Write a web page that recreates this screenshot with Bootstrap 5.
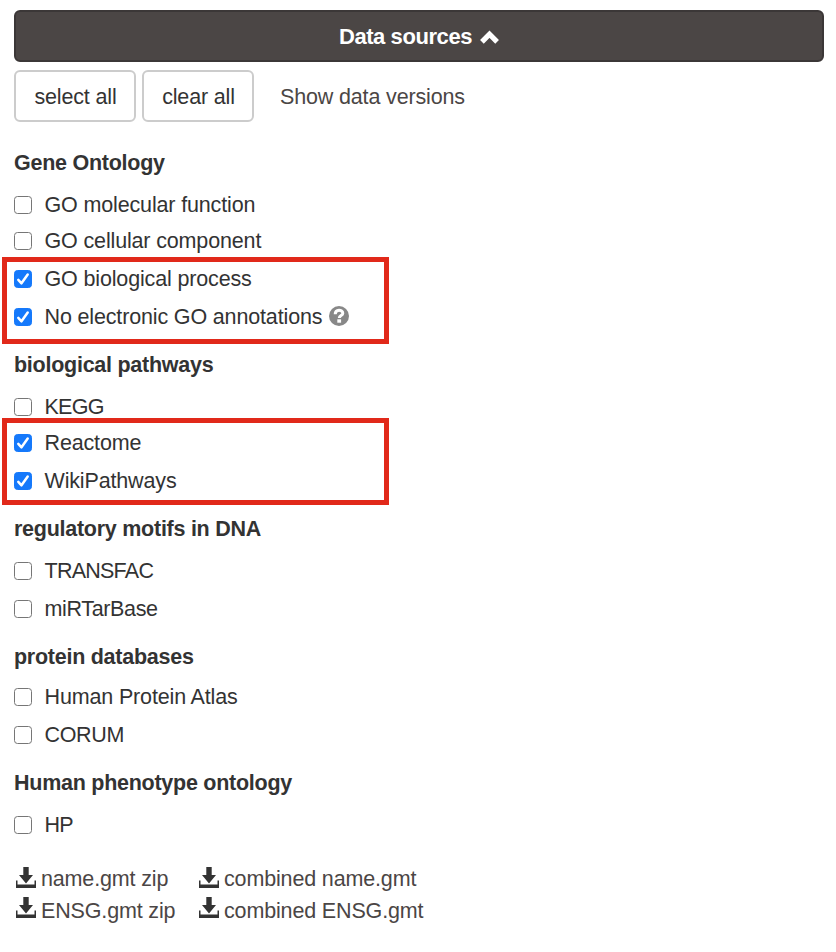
<!DOCTYPE html>
<html lang="en">
<head>
<meta charset="utf-8">
<meta name="viewport" content="width=device-width, initial-scale=1">
<title>Data sources</title>
<link href="https://cdn.jsdelivr.net/npm/bootstrap@5.3.0/dist/css/bootstrap.min.css" rel="stylesheet">
<style>
body{font-family:"Liberation Sans",Arial,sans-serif;font-size:21.5px;letter-spacing:-.15px;color:#333;background:#fff;line-height:32px}
.panel{padding:10px 12px 0 14px}
.panel-toggle{height:52px;padding-top:2px;background:#4b4645;border:2px solid #3b3737;border-radius:6px;color:#fff;font-size:22px;font-weight:700;letter-spacing:-.42px;gap:8px}
.tools{gap:6px}
.tool-btn{--bs-btn-color:#333;--bs-btn-border-color:#ccc;--bs-btn-border-width:2px;--bs-btn-border-radius:6px;--bs-btn-font-size:21.5px;--bs-btn-padding-x:0;--bs-btn-padding-y:0;height:52px;padding:2px 0 0 1px;letter-spacing:-.15px}
.w-select{width:122px}.w-clear{width:112px}
.versions{color:#4b4645;margin-left:20px;padding-top:2px}
.group-title{font-size:21.5px;line-height:32px;margin:16px 0 10px;font-weight:700;letter-spacing:-.26px}
.group-title.first{margin-top:25px}
.group-title.close-set{margin-bottom:8px}
.src{height:32px;display:flex;align-items:center}
.src + .src,.marked .src + .src{margin-top:6px}
.src.tight{margin-top:4px!important}
.src .form-check-input{width:18px;height:18px;margin:0 12.500px 0 0;border:1.5px solid #767676;border-radius:3.5px;flex:none}
.src .form-check-input:checked{background-color:#1579fb;border-color:#1579fb;background-size:18px;background-origin:border-box;background-image:url("data:image/svg+xml,%3csvg xmlns='http://www.w3.org/2000/svg' viewBox='0 0 18 18'%3e%3cpath fill='none' stroke='%23fff' stroke-width='2.5' stroke-linecap='round' stroke-linejoin='round' d='M4.300 9.800 7.500 13.300 13.700 4.500'/%3e%3c/svg%3e")}
.caps{letter-spacing:-.75px}
.mixed{letter-spacing:-.35px}
.hint{margin:-2px 0 0 6.500px}
.marked{position:relative;margin-top:6px}
.marked.near{margin-top:4px}
.marked::after{content:"";position:absolute;left:-12px;width:387px;top:-6px;bottom:-11px;border:5px solid #e1291a;pointer-events:none}
.marked.near::after{top:-9px;bottom:-8px}
.downloads{margin-top:22px;color:#4b4645}
.downloads .col-a{width:183px}
.dl svg{flex:none;margin:-4px 5px 0 2px}
.dl.lower svg{margin-top:-8px}
</style>
<script src="https://cdn.jsdelivr.net/npm/bootstrap@5.3.0/dist/js/bootstrap.bundle.min.js"></script>
</head>
<body>
<svg class="d-none"><symbol id="save" viewBox="0 0 20 21"><path fill="#333" d="M7.300 0h5.400v8H17l-7 8.500L3 8h4.300zM0 13.500h1.500V17.500h17v-4H20V21H0z"/></symbol></svg>
<main class="panel">
  <div class="panel-toggle d-flex align-items-center justify-content-center"><span>Data sources</span><svg width="19" height="14" viewBox="0 0 19 14"><path d="M1.900 11.800 9.500 4.100l7.600 7.700" fill="none" stroke="#fff" stroke-width="5.200"/></svg></div>
  <div class="tools d-flex align-items-center mt-2">
    <button class="btn tool-btn w-select" type="button">select all</button>
    <button class="btn tool-btn w-clear" type="button">clear all</button>
    <span class="versions">Show data versions</span>
  </div>
  <h2 class="group-title first"><span>Gene Ontology</span></h2>
  <label class="src"><input class="form-check-input" type="checkbox"><span>GO molecular function</span></label>
  <label class="src tight"><input class="form-check-input" type="checkbox"><span>GO cellular component</span></label>
  <div class="marked">
    <label class="src"><input class="form-check-input" type="checkbox" checked><span>GO biological process</span></label>
    <label class="src"><input class="form-check-input" type="checkbox" checked><span>No electronic GO annotations</span><svg class="hint" width="20" height="20" viewBox="0 0 20 20"><circle cx="10" cy="10" r="10" fill="#888"/><path d="M6.200 8.200c0-5.600 7.600-4.900 7.600-1 0 2.500-3.500 2.300-3.500 4.800" fill="none" stroke="#fff" stroke-width="3"/><path d="M8.300 13.300h3.800v3.400H8.300z" fill="#fff"/></svg></label>
  </div>
  <h2 class="group-title"><span>biological pathways</span></h2>
  <label class="src"><input class="form-check-input" type="checkbox"><span class="caps">KEGG</span></label>
  <div class="marked near">
    <label class="src"><input class="form-check-input" type="checkbox" checked><span>Reactome</span></label>
    <label class="src"><input class="form-check-input" type="checkbox" checked><span>WikiPathways</span></label>
  </div>
  <h2 class="group-title"><span>regulatory motifs in DNA</span></h2>
  <label class="src"><input class="form-check-input" type="checkbox"><span class="caps">TRANSFAC</span></label>
  <label class="src"><input class="form-check-input" type="checkbox"><span class="mixed">miRTarBase</span></label>
  <h2 class="group-title close-set"><span>protein databases</span></h2>
  <label class="src"><input class="form-check-input" type="checkbox"><span>Human Protein Atlas</span></label>
  <label class="src"><input class="form-check-input" type="checkbox"><span class="mixed">CORUM</span></label>
  <h2 class="group-title"><span>Human phenotype ontology</span></h2>
  <label class="src"><input class="form-check-input" type="checkbox"><span class="caps">HP</span></label>
  <div class="downloads">
    <div class="d-flex"><div class="dl col-a d-flex align-items-center"><svg width="20" height="21"><use href="#save"/></svg><span>name.gmt zip</span></div><div class="dl d-flex align-items-center"><svg width="20" height="21"><use href="#save"/></svg><span>combined name.gmt</span></div></div>
    <div class="d-flex"><div class="dl lower col-a d-flex align-items-center"><svg width="20" height="21"><use href="#save"/></svg><span>ENSG.gmt zip</span></div><div class="dl lower d-flex align-items-center"><svg width="20" height="21"><use href="#save"/></svg><span>combined ENSG.gmt</span></div></div>
  </div>
</main>
</body>
</html>
